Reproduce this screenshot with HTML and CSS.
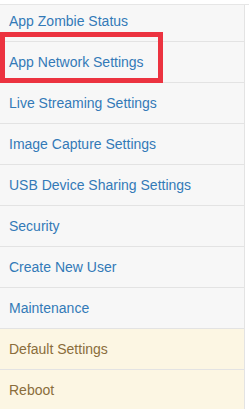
FILE: index.html
```html
<!DOCTYPE html>
<html>
<head>
<meta charset="utf-8">
<link rel="stylesheet" href="styles.css">
</head>
<body>
<div class="topbar"></div>
<div class="list">
  <a class="item">App Zombie Status</a>
  <a class="item">App Network Settings</a>
  <a class="item">Live Streaming Settings</a>
  <a class="item">Image Capture Settings</a>
  <a class="item">USB Device Sharing Settings</a>
  <a class="item">Security</a>
  <a class="item">Create New User</a>
  <a class="item">Maintenance</a>
  <a class="item warn">Default Settings</a>
  <a class="item warn">Reboot</a>
</div>
<div class="highlight"></div>
</body>
</html>
```
FILE: styles.css
```css
html, body {
  margin: 0;
  padding: 0;
  background: #fff;
  font-family: "Liberation Sans", Arial, sans-serif;
  font-size: 14px;
  line-height: 20px;
}
.topbar {
  position: fixed;
  top: 0;
  left: 0;
  right: 0;
  height: 4px;
  background: #fff;
  border-bottom: 1px solid #e6e6e6;
  z-index: 2;
}
.list {
  display: flex;
  flex-direction: column;
  width: 245px;
  margin-top: 1px;
  box-sizing: border-box;
  border-right: 1px solid #e3e3e3;
}
.item {
  display: block;
  padding: 10px 9px;
  background: #f7f7f7;
  color: #337ab7;
  border-bottom: 1px solid #e3e3e3;
  text-decoration: none;
}
.item.warn {
  background: #fcf6e3;
  color: #8a6d3b;
}
.highlight {
  position: absolute;
  left: 0;
  top: 32px;
  width: 163px;
  height: 51px;
  box-sizing: border-box;
  border: 5px solid #ec3340;
  z-index: 3;
}
```
